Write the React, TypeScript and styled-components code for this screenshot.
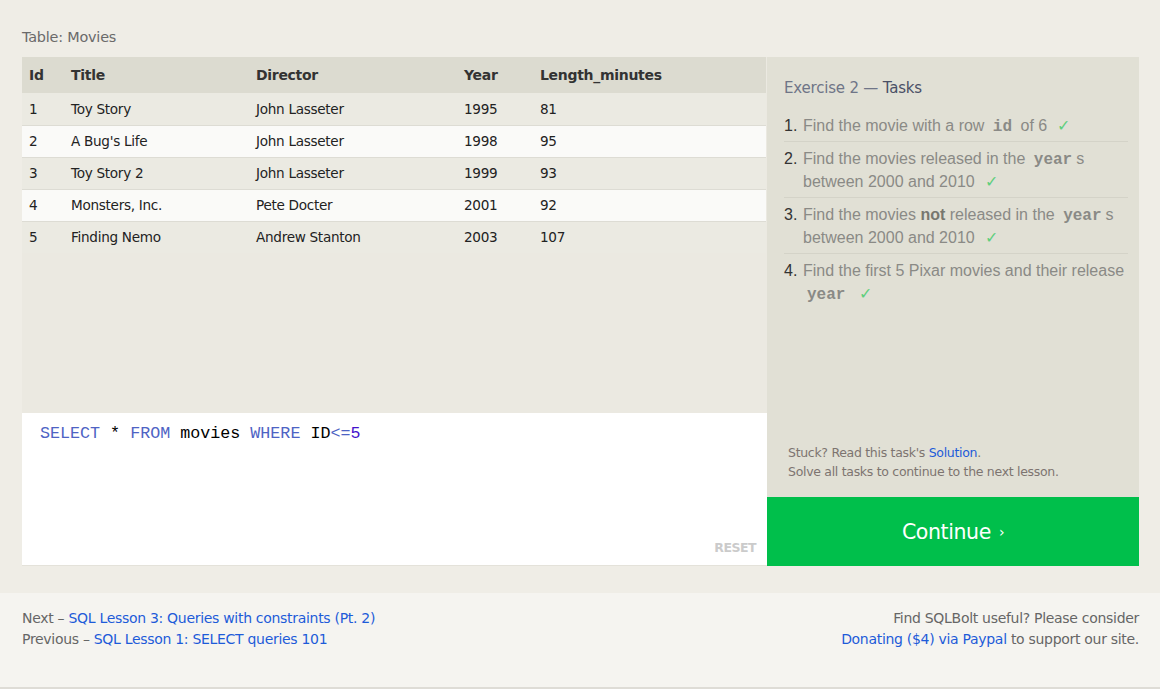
import React from "react";
import styled, { createGlobalStyle } from "styled-components";

const Global = createGlobalStyle`
  html, body { margin: 0; padding: 0; background: #f5f4f0; }
  body { font-family: "DejaVu Sans", Verdana, sans-serif; }
  * { box-sizing: border-box; }
`;

const Page = styled.div`
  width: 1160px;
  height: 689px;
  display: flex;
  flex-direction: column;
  border-bottom: 2px solid #dedcd6;
`;

const Top = styled.section`
  background: #efede6;
  padding: 28px 21px 27px 22px;
`;

const Caption = styled.div`
  font-size: 14.4px;
  color: #6a6a6a;
  line-height: 18px;
  margin-bottom: 11px;
  letter-spacing: -0.2px;
`;

const Workspace = styled.div`
  display: grid;
  grid-template-columns: 745px 372px;
  height: 509px;
`;

const LeftCol = styled.div`
  display: flex;
  flex-direction: column;
`;

const TableArea = styled.div`
  background: #ebe9e1;
  height: 356px;
`;

const Table = styled.table`
  width: 744px;
  border-collapse: collapse;
  font-size: 13.6px;
  letter-spacing: -0.3px;
  color: #222;
`;

const Th = styled.th<{ $w: number }>`
  width: ${(p) => p.$w}px;
  text-align: left;
  font-weight: bold;
  font-size: 14px;
  height: 36px;
  padding: 0 0 0 7px;
  background: #dcdbd0;
  color: #333;
`;

const Tr = styled.tr<{ $alt: boolean }>`
  background: ${(p) => (p.$alt ? "#fafaf8" : "#ebeae2")};
  border-bottom: 1px solid #dddcd4;
  &:last-child { border-bottom: none; }
`;

const Td = styled.td`
  height: 32px;
  padding: 0 0 0 7px;
`;

const Editor = styled.div`
  background: #fff;
  height: 153px;
  position: relative;
  padding: 11px 18px;
  border-bottom: 1px solid #e4e2da;
`;

const Code = styled.pre`
  margin: 0;
  font-family: "Liberation Mono", "Courier New", monospace;
  font-size: 16.7px;
  line-height: 19px;
  color: #000;
`;

const Kw = styled.span`
  color: #4e63c4;
`;
const Op = styled.span`
  color: #4e63c4;
`;
const Num = styled.span`
  color: #4411cc;
`;

const Reset = styled.span`
  position: absolute;
  right: 11px;
  bottom: 10px;
  font-size: 12.5px;
  font-weight: bold;
  color: #cbcbcb;
  letter-spacing: -0.5px;
`;

const RightCol = styled.div`
  display: flex;
  flex-direction: column;
`;

const TaskPanel = styled.div`
  flex: 1;
  background: #e1e0d5;
  padding: 20px 11px 0 17px;
  display: flex;
  flex-direction: column;
`;

const TaskTitle = styled.h3`
  margin: 0 0 10px 0;
  font-weight: normal;
  font-size: 15px;
  color: #6f7587;
  letter-spacing: -0.2px;
  line-height: 22px;
`;

const TaskTitleStrong = styled.span`
  color: #4a5066;
`;

const TaskList = styled.ol`
  margin: 0;
  padding: 0;
  list-style: none;
  font-family: "Liberation Sans", Arial, sans-serif;
  font-size: 16px;
  color: #8a8a86;
`;

const TaskItem = styled.li`
  display: flex;
  line-height: 23px;
  padding: 5px 0 4px 0;
  border-bottom: 1px solid #d4d3c8;
  &:last-child { border-bottom: none; }
`;

const TaskNum = styled.span`
  width: 19px;
  flex: none;
  color: #333;
`;

const TaskText = styled.span`
  flex: 1;
`;

const Mono = styled.code`
  font-family: "Liberation Mono", "Courier New", monospace;
  font-weight: bold;
  font-size: 16px;
  line-height: 1;
  color: #8a8a86;
  margin: 0 4px;
`;

const Bold = styled.b`
  color: #77776f;
`;

const Check = styled.span`
  color: #5fcf7d;
  margin-left: 10px;
`;

const Help = styled.div`
  margin-top: auto;
  padding: 0 0 16px 4px;
  font-size: 12.5px;
  line-height: 19px;
  color: #7d7470;
  letter-spacing: -0.3px;
`;

const Link = styled.a`
  color: #1d5bd9;
  text-decoration: none;
`;

const ContinueBtn = styled.button`
  height: 69px;
  border: none;
  background: #00bf4b;
  color: #fff;
  font-family: "DejaVu Sans", Verdana, sans-serif;
  font-size: 20.5px;
  letter-spacing: -0.4px;
  cursor: pointer;
  display: flex;
  align-items: center;
  justify-content: center;
  gap: 8px;
`;

const Chevron = styled.span`
  font-size: 14px;
`;

const Footer = styled.footer`
  flex: 1;
  background: #f5f4f0;
  padding: 15px 21px 0 22px;
  display: flex;
  justify-content: space-between;
  font-size: 14px;
  line-height: 21px;
  color: #666;
  letter-spacing: -0.3px;
`;

const FooterBlock = styled.div<{ $right?: boolean }>`
  text-align: ${(p) => (p.$right ? "right" : "left")};
`;

const rows = [
  ["1", "Toy Story", "John Lasseter", "1995", "81"],
  ["2", "A Bug's Life", "John Lasseter", "1998", "95"],
  ["3", "Toy Story 2", "John Lasseter", "1999", "93"],
  ["4", "Monsters, Inc.", "Pete Docter", "2001", "92"],
  ["5", "Finding Nemo", "Andrew Stanton", "2003", "107"],
];

export default function App() {
  return (
    <>
      <Global />
      <Page>
        <Top>
          <Caption>Table: Movies</Caption>
          <Workspace>
            <LeftCol>
              <TableArea>
                <Table>
                  <thead>
                    <tr>
                      <Th $w={42}>Id</Th>
                      <Th $w={185}>Title</Th>
                      <Th $w={208}>Director</Th>
                      <Th $w={76}>Year</Th>
                      <Th $w={233}>Length_minutes</Th>
                    </tr>
                  </thead>
                  <tbody>
                    {rows.map((r, i) => (
                      <Tr key={r[0]} $alt={i % 2 === 1}>
                        {r.map((c, j) => (
                          <Td key={j}>{c}</Td>
                        ))}
                      </Tr>
                    ))}
                  </tbody>
                </Table>
              </TableArea>
              <Editor>
                <Code>
                  <Kw>SELECT</Kw> * <Kw>FROM</Kw> movies <Kw>WHERE</Kw> ID<Op>&lt;=</Op>
                  <Num>5</Num>
                </Code>
                <Reset>RESET</Reset>
              </Editor>
            </LeftCol>
            <RightCol>
              <TaskPanel>
                <TaskTitle>
                  Exercise 2 — <TaskTitleStrong>Tasks</TaskTitleStrong>
                </TaskTitle>
                <TaskList>
                  <TaskItem>
                    <TaskNum>1.</TaskNum>
                    <TaskText>
                      Find the movie with a row <Mono>id</Mono> of 6<Check>✓</Check>
                    </TaskText>
                  </TaskItem>
                  <TaskItem>
                    <TaskNum>2.</TaskNum>
                    <TaskText>
                      Find the movies released in the <Mono>year</Mono>s between 2000 and 2010
                      <Check>✓</Check>
                    </TaskText>
                  </TaskItem>
                  <TaskItem>
                    <TaskNum>3.</TaskNum>
                    <TaskText>
                      Find the movies <Bold>not</Bold> released in the <Mono>year</Mono>s between 2000
                      and 2010<Check>✓</Check>
                    </TaskText>
                  </TaskItem>
                  <TaskItem>
                    <TaskNum>4.</TaskNum>
                    <TaskText>
                      Find the first 5 Pixar movies and their release <Mono>year</Mono>
                      <Check>✓</Check>
                    </TaskText>
                  </TaskItem>
                </TaskList>
                <Help>
                  Stuck? Read this task's <Link href="#">Solution</Link>.
                  <br />
                  Solve all tasks to continue to the next lesson.
                </Help>
              </TaskPanel>
              <ContinueBtn>
                Continue <Chevron>›</Chevron>
              </ContinueBtn>
            </RightCol>
          </Workspace>
        </Top>
        <Footer>
          <FooterBlock>
            Next – <Link href="#">SQL Lesson 3: Queries with constraints (Pt. 2)</Link>
            <br />
            Previous – <Link href="#">SQL Lesson 1: SELECT queries 101</Link>
          </FooterBlock>
          <FooterBlock $right>
            Find SQLBolt useful? Please consider
            <br />
            <Link href="#">Donating ($4) via Paypal</Link> to support our site.
          </FooterBlock>
        </Footer>
      </Page>
    </>
  );
}
